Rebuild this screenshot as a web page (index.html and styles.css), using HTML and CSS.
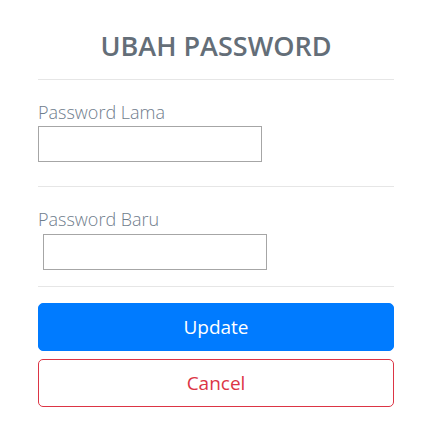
FILE: index.html
```html
<!DOCTYPE html>
<html>
<head>
<meta charset="utf-8">
<link rel="stylesheet" href="styles.css">
</head>
<body>
<div class="card">
  <h1 class="title">UBAH PASSWORD</h1>
  <hr class="sep sep-top">
  <div class="field">
    <label class="label">Password Lama</label>
    <input class="input" type="password">
  </div>
  <hr class="sep sep-mid">
  <div class="field">
    <label class="label">Password Baru</label>
    <input class="input input-shift" type="password">
  </div>
  <hr class="sep sep-bottom">
  <div class="actions">
    <button class="btn btn-primary">Update</button>
    <button class="btn btn-cancel">Cancel</button>
  </div>
</div>
</body>
</html>
```
FILE: styles.css
```css
html, body {
  margin: 0;
  padding: 0;
  background: #ffffff;
}
body {
  font-family: "Open Sans", "Noto Sans", sans-serif;
}
.card {
  width: 356px;
  margin-left: 38px;
  padding-top: 26px;
}
.title {
  margin: 0;
  font-size: 27px;
  line-height: 40px;
  font-weight: 600;
  color: #646e78;
  text-align: center;
}
.sep {
  border: 0;
  border-top: 1px solid #e6e6e6;
  margin: 0;
}
.sep-top { margin-top: 13px; }
.sep-mid { margin-top: 24px; }
.sep-bottom { margin-top: 16px; }
.field {
  display: flex;
  flex-direction: column;
  align-items: flex-start;
  margin-top: 20px;
}
.label {
  font-size: 18px;
  line-height: 24px;
  font-weight: 300;
  color: #6f7d8c;
}
.input {
  margin: 2px 0 0 0;
  width: 224px;
  height: 36px;
  box-sizing: border-box;
  border: 1px solid #a6a6a6;
  padding: 0;
  background: #fff;
}
.input-shift {
  margin-left: 5px;
  margin-top: 3px;
}
.actions {
  display: flex;
  flex-direction: column;
  gap: 8px;
  margin-top: 16px;
}
.btn {
  height: 48px;
  box-sizing: border-box;
  border-radius: 5px;
  font-family: "Open Sans", "Noto Sans", sans-serif;
  font-size: 19px;
  cursor: pointer;
}
.btn-primary {
  background: #007bff;
  border: 1px solid #007bff;
  color: #ffffff;
}
.btn-cancel {
  background: #ffffff;
  border: 1px solid #dc3545;
  color: #dc3545;
}
```
